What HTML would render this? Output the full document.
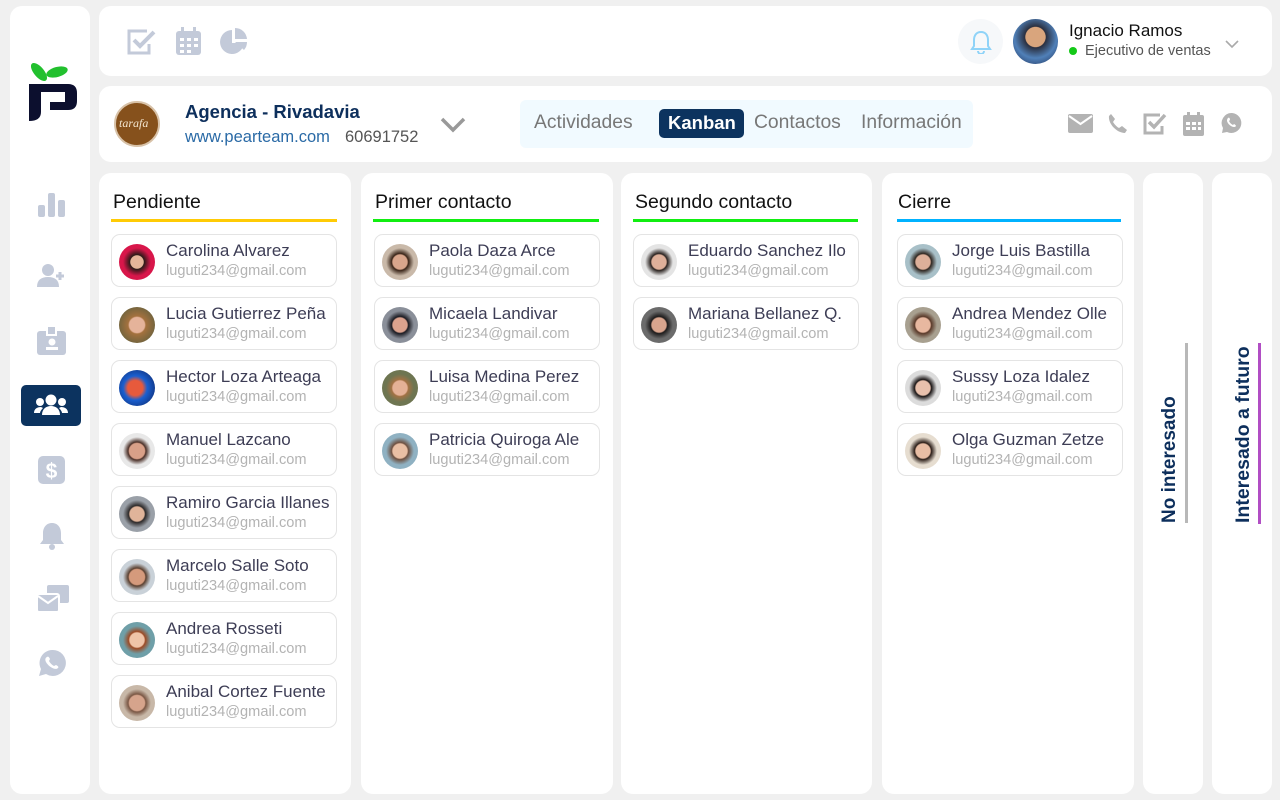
<!DOCTYPE html>
<html><head><meta charset="utf-8"><style>
*{box-sizing:border-box;margin:0;padding:0}
body{width:1280px;height:800px;background:#f0f0f0;font-family:"Liberation Sans",sans-serif;position:relative;overflow:hidden}
.p{position:absolute;background:#fff;border-radius:12px}
.ic{position:absolute}
.col h3{position:absolute;left:14px;top:18px;font-size:19.5px;font-weight:normal;color:#111}
.col .ul{position:absolute;left:12px;right:14px;top:46px;height:3px}
.card{position:absolute;left:12px;width:226px;height:53px;border:1px solid #e4e4e4;border-radius:9px}
.card .av{position:absolute;left:7px;top:9px;width:36px;height:36px;border-radius:50%}
.card .n{position:absolute;left:54px;top:6px;font-size:17px;color:#3d3d55;white-space:nowrap}
.card .e{position:absolute;left:54px;top:28px;font-size:14.6px;color:#b3b3b3}
.vt{position:absolute;transform:rotate(-90deg);transform-origin:left top;font-weight:bold;color:#0d2f5c;white-space:nowrap}
</style></head><body>
<div class="p" style="left:10px;top:6px;width:80px;height:788px"></div>
<svg class="ic" style="left:28px;top:60px" width="50" height="62" viewBox="0 0 50 62">
<ellipse cx="11" cy="12" rx="5" ry="11" transform="rotate(-40 11 12)" fill="#22c02e"/><ellipse cx="29" cy="12" rx="11" ry="5" transform="rotate(-15 29 12)" fill="#22c02e"/>
<path d="M1 24H40Q49 24 49 33V41Q49 50 40 50H22V42H37V32H13V52Q13 61 1 61Z" fill="#0c0f2e"/></svg>
<svg class="ic" style="left:37px;top:190px" width="28" height="28"><rect x="1" y="15" width="7" height="12" rx="2" fill="#c3cad9"/><rect x="11" y="3" width="7" height="24" rx="2" fill="#c3cad9"/><rect x="21" y="10" width="7" height="17" rx="2" fill="#c3cad9"/></svg>
<svg class="ic" style="left:37px;top:263px" width="30" height="26"><circle cx="11" cy="7" r="6" fill="#c3cad9"/><path d="M0 24c0-7 4-10 11-10s11 3 11 10z" fill="#c3cad9"/><path d="M23 9v8M19 13h8" stroke="#c3cad9" stroke-width="3"/></svg>
<svg class="ic" style="left:37px;top:326px" width="30" height="30"><rect x="0" y="5" width="29" height="24" rx="3" fill="#c3cad9"/><rect x="10" y="0" width="9" height="9" fill="#c3cad9" stroke="#fff" stroke-width="2"/><circle cx="15" cy="16" r="3.5" fill="#fff"/><rect x="9" y="21" width="12" height="3" fill="#fff"/></svg>
<div class="ic" style="left:21px;top:385px;width:60px;height:41px;background:#0c335f;border-radius:5px"></div>
<svg class="ic" style="left:33px;top:393px" width="36" height="24"><circle cx="18" cy="7" r="5.5" fill="#fff"/><circle cx="7" cy="9" r="4" fill="#fff"/><circle cx="29" cy="9" r="4" fill="#fff"/><path d="M9 22c0-6 4-9 9-9s9 3 9 9z" fill="#fff"/><path d="M1 20c0-4 3-6 7-6l2 1c-2 2-3 4-3 5z M35 20c0-4-3-6-7-6l-2 1c2 2 3 4 3 5z" fill="#fff"/></svg>
<svg class="ic" style="left:38px;top:456px" width="27" height="28"><rect x="0" y="0" width="27" height="28" rx="5" fill="#c3cad9"/><text x="13.5" y="22" text-anchor="middle" font-family="Liberation Sans" font-weight="bold" font-size="21" fill="#fff">$</text></svg>
<svg class="ic" style="left:39px;top:521px" width="26" height="30"><path d="M13 2c6 0 9 5 9 10v7l3 4H1l3-4v-7c0-5 3-10 9-10z" fill="#c3cad9"/><circle cx="13" cy="26" r="3" fill="#c3cad9"/></svg>
<svg class="ic" style="left:37px;top:585px" width="32" height="28"><rect x="10" y="0" width="22" height="18" rx="2" fill="#c3cad9"/><rect x="0" y="9" width="22" height="18" rx="2" fill="#c3cad9" stroke="#fff" stroke-width="2"/><path d="M1 11l10 7 10-7" stroke="#fff" stroke-width="2" fill="none"/></svg>
<svg class="ic" style="left:38px;top:649px" width="28" height="28"><path d="M14 1a13 13 0 1 1-6 24l-7 2 2-7A13 13 0 0 1 14 1z" fill="#c3cad9"/><path d="M9 8c1-1 2 0 3 2l-1 2c1 2 3 4 5 5l2-1c2 1 3 2 2 3-3 3-10-2-12-6-1-2-1-4 1-5z" fill="#fff"/></svg>

<div class="p" style="left:99px;top:6px;width:1173px;height:70px"></div>
<svg class="ic" style="left:127px;top:28px" width="30" height="27"><path d="M20 3H2v22h20v-9" stroke="#c3cad9" stroke-width="3" fill="none"/><path d="M7 12l6 6 14-14" stroke="#c3cad9" stroke-width="4" fill="none"/></svg>
<svg class="ic" style="left:176px;top:27px" width="26" height="28"><rect x="0" y="4" width="25" height="24" rx="3" fill="#c3cad9"/><rect x="5" y="0" width="3" height="6" fill="#c3cad9"/><rect x="17" y="0" width="3" height="6" fill="#c3cad9"/><g fill="#fff"><rect x="4" y="11" width="4" height="3"/><rect x="11" y="11" width="4" height="3"/><rect x="18" y="11" width="4" height="3"/><rect x="4" y="17" width="4" height="3"/><rect x="11" y="17" width="4" height="3"/><rect x="18" y="17" width="4" height="3"/><rect x="4" y="23" width="4" height="3"/><rect x="11" y="23" width="4" height="3"/></g></svg>
<svg class="ic" style="left:220px;top:27px" width="30" height="28"><path d="M12 3a12 12 0 1 0 12 13H12z" fill="#c3cad9"/><path d="M15 1a12 12 0 0 1 12 11H15z" fill="#c3cad9"/><path d="M15 15h12a12 12 0 0 1-3 8z" fill="#c3cad9"/></svg>
<div class="ic" style="left:958px;top:19px;width:45px;height:45px;border-radius:50%;background:#f6f8fa"></div>
<svg class="ic" style="left:970px;top:30px" width="22" height="24"><path d="M11 2c5 0 7 4 7 8v6l2 3H2l2-3v-6c0-4 2-8 7-8z M8 21a3 3 0 0 0 6 0" stroke="#8fd3f8" stroke-width="2" fill="none"/></svg>
<div class="ic" style="left:1013px;top:19px;width:45px;height:45px;border-radius:50%;background:radial-gradient(circle at 50% 40%,#d9a57d 0 28%,#2a2f3f 30%,#5080b8 60%,#1c2d55)"></div>
<div class="ic" style="left:1069px;top:21px;font-size:17px;color:#111">Ignacio Ramos</div>
<div class="ic" style="left:1069px;top:47px;width:8px;height:8px;border-radius:50%;background:#14c918"></div>
<div class="ic" style="left:1085px;top:43px;font-size:14.5px;color:#555">Ejecutivo de ventas</div>
<svg class="ic" style="left:1225px;top:40px" width="14" height="9"><path d="M1 1l6 6 6-6" stroke="#aaa" stroke-width="1.6" fill="none"/></svg>

<div class="p" style="left:99px;top:86px;width:1173px;height:76px"></div>
<div class="ic" style="left:114px;top:101px;width:46px;height:46px;border-radius:50%;background:#86511c;border:2px solid #d8c2a8"></div>
<div class="ic" style="left:119px;top:116px;font-size:12px;color:#f3e6d0;font-style:italic;font-family:'Liberation Serif',serif">tarafa</div>
<div class="ic" style="left:185px;top:101px;font-size:18.5px;font-weight:bold;color:#0d2f5c">Agencia - Rivadavia</div>
<div class="ic" style="left:185px;top:128px;font-size:16.5px;color:#2a6aa6">www.pearteam.com</div>
<div class="ic" style="left:345px;top:128px;font-size:16.5px;color:#555">60691752</div>
<svg class="ic" style="left:440px;top:117px" width="26" height="16"><path d="M2 2l11 11 11-11" stroke="#999" stroke-width="3.5" fill="none"/></svg>
<div class="ic" style="left:520px;top:100px;width:453px;height:48px;border-radius:6px;background:#f1faff"></div>
<div class="ic" style="left:534px;top:112px;font-size:19.3px;color:#777">Actividades</div>
<div class="ic" style="left:659px;top:109px;width:85px;height:29px;border-radius:5px;background:#0c335f"></div>
<div class="ic" style="left:668px;top:112px;font-size:18.5px;font-weight:bold;color:#fff">Kanban</div>
<div class="ic" style="left:754px;top:112px;font-size:19.3px;color:#777">Contactos</div>
<div class="ic" style="left:861px;top:112px;font-size:19.3px;color:#777">Información</div>
<svg class="ic" style="left:1068px;top:114px" width="25" height="20"><rect x="0" y="0" width="25" height="19" rx="2" fill="#b3b3b3"/><path d="M1 2l11.5 8L24 2" stroke="#fff" stroke-width="2" fill="none"/></svg>
<svg class="ic" style="left:1108px;top:113px" width="20" height="20"><path d="M3 1l4 5-2 3c2 3 4 5 6 6l3-2 5 4-2 3C9 20 0 11 1 3z" fill="#b3b3b3"/></svg>
<svg class="ic" style="left:1143px;top:112px" width="24" height="23"><path d="M17 3H2v18h17v-7" stroke="#b3b3b3" stroke-width="3" fill="none"/><path d="M6 10l5 5 11-12" stroke="#b3b3b3" stroke-width="3.5" fill="none"/></svg>
<svg class="ic" style="left:1183px;top:112px" width="22" height="24"><rect x="0" y="3" width="21" height="21" rx="2" fill="#b3b3b3"/><rect x="4" y="0" width="3" height="5" fill="#b3b3b3"/><rect x="14" y="0" width="3" height="5" fill="#b3b3b3"/><g fill="#fff"><rect x="3" y="10" width="4" height="3"/><rect x="9" y="10" width="4" height="3"/><rect x="15" y="10" width="3" height="3"/><rect x="3" y="15" width="4" height="3"/><rect x="9" y="15" width="4" height="3"/><rect x="15" y="15" width="3" height="3"/></g></svg>
<svg class="ic" style="left:1221px;top:112px" width="22" height="22"><path d="M11 1a10 10 0 1 1-5 19l-5 1 1-5A10 10 0 0 1 11 1z" fill="#b3b3b3"/><path d="M7 6c1-1 2 0 2 2l-1 1c1 2 2 3 4 4l1-1c2 1 2 2 2 2-2 3-8-1-9-5 0-1 0-2 1-3z" fill="#fff"/></svg>

<div class="p col" style="left:99px;top:173px;width:252px;height:621px"><h3>Pendiente</h3><div class="ul" style="background:#ffcb05"></div>
<div class="card" style="top:61px"><div class="av" style="background:radial-gradient(circle at 50% 50%,#e6b59a 0 25%,#2a1a17 28%,#d8164a 55%)"></div><div class="n">Carolina Alvarez</div><div class="e">luguti234@gmail.com</div></div>
<div class="card" style="top:124px"><div class="av" style="background:radial-gradient(circle,#e5b39a 0 30%,#a4713e 35%,#4f5b3d)"></div><div class="n">Lucia Gutierrez Peña</div><div class="e">luguti234@gmail.com</div></div>
<div class="card" style="top:187px"><div class="av" style="background:radial-gradient(circle at 45% 50%,#e75a3c 0 28%,#1a5fd0 45%,#0b1e58)"></div><div class="n">Hector Loza Arteaga</div><div class="e">luguti234@gmail.com</div></div>
<div class="card" style="top:250px"><div class="av" style="background:radial-gradient(circle,#d9a088 0 30%,#4b3028 35%,#e8e8e8 55%)"></div><div class="n">Manuel Lazcano</div><div class="e">luguti234@gmail.com</div></div>
<div class="card" style="top:313px"><div class="av" style="background:radial-gradient(circle,#e0b49a 0 28%,#2d2a2a 33%,#9aa0a8 55%)"></div><div class="n">Ramiro Garcia Illanes</div><div class="e">luguti234@gmail.com</div></div>
<div class="card" style="top:376px"><div class="av" style="background:radial-gradient(circle,#d59a7c 0 30%,#5a4030 35%,#c9d1d8 55%)"></div><div class="n">Marcelo Salle Soto</div><div class="e">luguti234@gmail.com</div></div>
<div class="card" style="top:439px"><div class="av" style="background:radial-gradient(circle,#efc4a8 0 28%,#9b4a25 33%,#6f9fa8 55%)"></div><div class="n">Andrea Rosseti</div><div class="e">luguti234@gmail.com</div></div>
<div class="card" style="top:502px"><div class="av" style="background:radial-gradient(circle,#d6a48c 0 30%,#7a5744 35%,#c8b8a8 55%)"></div><div class="n">Anibal Cortez Fuente</div><div class="e">luguti234@gmail.com</div></div>
</div>

<div class="p col" style="left:361px;top:173px;width:252px;height:621px"><h3>Primer contacto</h3><div class="ul" style="background:#11ee11"></div>
<div class="card" style="top:61px;left:13px"><div class="av" style="background:radial-gradient(circle,#d9a68c 0 28%,#3a2518 33%,#c9b9a9 55%)"></div><div class="n">Paola Daza Arce</div><div class="e">luguti234@gmail.com</div></div>
<div class="card" style="top:124px;left:13px"><div class="av" style="background:radial-gradient(circle,#dba28e 0 28%,#1b1b22 33%,#8a8f99 55%)"></div><div class="n">Micaela Landivar</div><div class="e">luguti234@gmail.com</div></div>
<div class="card" style="top:187px;left:13px"><div class="av" style="background:radial-gradient(circle,#e4b196 0 28%,#a27244 33%,#6e7551 55%)"></div><div class="n">Luisa Medina Perez</div><div class="e">luguti234@gmail.com</div></div>
<div class="card" style="top:250px;left:13px"><div class="av" style="background:radial-gradient(circle,#e9bfa4 0 28%,#6e5040 33%,#8fb1c2 55%)"></div><div class="n">Patricia Quiroga Ale</div><div class="e">luguti234@gmail.com</div></div>
</div>

<div class="p col" style="left:621px;top:173px;width:251px;height:621px"><h3>Segundo contacto</h3><div class="ul" style="background:#11ee11"></div>
<div class="card" style="top:61px"><div class="av" style="background:radial-gradient(circle,#dfb09a 0 28%,#2b2320 33%,#e4e4e4 55%)"></div><div class="n">Eduardo Sanchez Ilo</div><div class="e">luguti234@gmail.com</div></div>
<div class="card" style="top:124px"><div class="av" style="background:radial-gradient(circle,#d9a58e 0 28%,#1d1b1b 33%,#6b6b6b 55%)"></div><div class="n">Mariana Bellanez Q.</div><div class="e">luguti234@gmail.com</div></div>
</div>

<div class="p col" style="left:882px;top:173px;width:252px;height:621px"><h3 style="left:16px">Cierre</h3><div class="ul" style="background:#00b2ff;left:15px;right:13px"></div>
<div class="card" style="top:61px;left:15px"><div class="av" style="background:radial-gradient(circle,#ddb09a 0 28%,#302822 33%,#a8c0c8 55%)"></div><div class="n">Jorge Luis Bastilla</div><div class="e">luguti234@gmail.com</div></div>
<div class="card" style="top:124px;left:15px"><div class="av" style="background:radial-gradient(circle,#e8b8a0 0 28%,#5a3a2a 33%,#a8a090 55%)"></div><div class="n">Andrea Mendez Olle</div><div class="e">luguti234@gmail.com</div></div>
<div class="card" style="top:187px;left:15px"><div class="av" style="background:radial-gradient(circle,#e8c0ac 0 28%,#1b1616 33%,#dcdcdc 55%)"></div><div class="n">Sussy Loza Idalez</div><div class="e">luguti234@gmail.com</div></div>
<div class="card" style="top:250px;left:15px"><div class="av" style="background:radial-gradient(circle,#e8bda4 0 28%,#2c1e18 33%,#e6ddd0 55%)"></div><div class="n">Olga Guzman Zetze</div><div class="e">luguti234@gmail.com</div></div>
</div>

<div class="p" style="left:1143px;top:173px;width:60px;height:621px"></div>
<div class="vt" style="left:1159px;top:523px;font-size:19px">No interesado</div>
<div class="ic" style="left:1185px;top:343px;width:3px;height:180px;background:#b8b8b8"></div>
<div class="p" style="left:1212px;top:173px;width:60px;height:621px"></div>
<div class="vt" style="left:1232px;top:523px;font-size:19.5px">Interesado a futuro</div>
<div class="ic" style="left:1258px;top:343px;width:3px;height:181px;background:#b14ec4"></div>
</body></html>
